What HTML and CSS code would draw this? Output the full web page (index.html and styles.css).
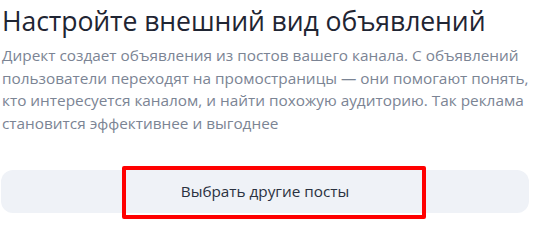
FILE: index.html
```html
<!DOCTYPE html>
<html lang="ru">
<head>
<meta charset="utf-8">
<link rel="stylesheet" href="styles.css">
</head>
<body>
<div class="card">
  <h1 class="title">Настройте внешний вид объявлений</h1>
  <p class="desc">Директ создает объявления из постов вашего канала. С объявлений пользователи переходят на промостраницы — они помогают понять, кто интересуется каналом, и найти похожую аудиторию. Так реклама становится эффективнее и выгоднее</p>
  <div class="actions">
    <button class="btn"><span class="btn-label">Выбрать другие посты</span></button>
    <div class="highlight"></div>
  </div>
</div>
</body>
</html>
```

FILE: styles.css
```css
html, body {
  margin: 0;
  padding: 0;
  background: #ffffff;
}
body {
  font-family: "Open Sans", "Liberation Sans", Arial, sans-serif;
  width: 543px;
  height: 238px;
  overflow: hidden;
}
.card {
  padding: 5px 14px 0 2px;
}
.title {
  margin: 0;
  font-family: "Open Sans", "Liberation Sans", sans-serif;
  font-weight: 400;
  font-size: 26.6px;
  line-height: 32px;
  color: #1f2533;
  letter-spacing: -0.1px;
  white-space: nowrap;
}
.desc {
  margin: 7px 0 0 0;
  font-size: 15.35px;
  line-height: 22.7px;
  color: #7b8494;
  letter-spacing: 0;
}
.actions {
  position: relative;
  margin-top: 35px;
  margin-left: -1px;
}
.btn {
  display: flex;
  align-items: center;
  justify-content: center;
  width: 528px;
  height: 43px;
  border: none;
  border-radius: 12px;
  background: #eff2f7;
  font-family: "Open Sans", "Liberation Sans", sans-serif;
  font-size: 15.3px;
  color: #2a3140;
  padding: 0;
  cursor: pointer;
}
.highlight {
  position: absolute;
  left: 121px;
  top: -4px;
  width: 296px;
  height: 45px;
  border: 4px solid #ff0000;
  border-radius: 2px;
  pointer-events: none;
}
```
